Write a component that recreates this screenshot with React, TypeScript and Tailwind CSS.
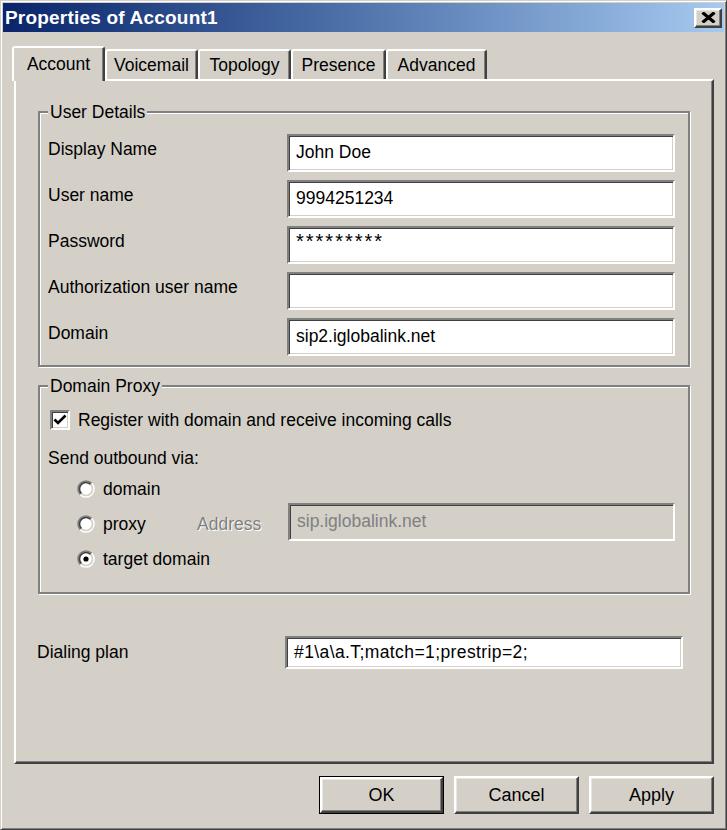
import React from "react";

const sunken =
  "border-2 border-t-[#808080] border-l-[#808080] border-b-white border-r-white shadow-[inset_1px_1px_0_#404040,inset_-1px_-1px_0_#d4d0c8]";
const raised =
  "border-2 border-t-white border-l-white border-b-[#404040] border-r-[#404040] shadow-[inset_-1px_-1px_0_#808080,inset_1px_1px_0_#e8e6e1]";
const etched =
  "border-2 border-[#808080] shadow-[inset_1px_1px_0_#ffffff,1px_1px_0_#ffffff]";

function Radio({ checked }: { checked?: boolean }) {
  return (
    <svg width="18" height="18" viewBox="0 0 18 18" className="shrink-0">
      <circle cx="9" cy="9" r="6.2" fill="#ffffff" />
      <path d="M3.34 14.66 A8 8 0 0 1 14.66 3.34" stroke="#808080" strokeWidth="1.6" fill="none" />
      <path d="M14.66 3.34 A8 8 0 0 1 3.34 14.66" stroke="#ffffff" strokeWidth="1.6" fill="none" />
      <path d="M4.4 13.6 A6.5 6.5 0 0 1 13.6 4.4" stroke="#404040" strokeWidth="1.6" fill="none" />
      <path d="M13.6 4.4 A6.5 6.5 0 0 1 4.4 13.6" stroke="#d4d0c8" strokeWidth="1.6" fill="none" />
      {checked && <circle cx="9" cy="9" r="2.6" fill="#000000" />}
    </svg>
  );
}

function Field({ label, value, masked }: { label: string; value: string; masked?: boolean }) {
  return (
    <div className="flex h-[38px]">
      <div className="w-[239px] shrink-0 pt-[5px] leading-[20px]">{label}</div>
      <div
        className={`flex-1 bg-white ${sunken} flex items-center pl-[7px] leading-[20px] ${
          masked ? "pb-[8px] tracking-[2px] text-[20px]" : "pb-[3px]"
        }`}
      >
        {value}
      </div>
    </div>
  );
}

function Tab({ label, selected, w }: { label: string; selected?: boolean; w: string }) {
  if (selected) {
    return (
      <div
        className={`relative z-10 ${w} h-[35px] bg-[#d4d0c8] border-l-2 border-t-2 border-r-2 border-l-white border-t-white border-r-[#404040] rounded-t-[3px] shadow-[inset_-1px_0_0_#808080] flex items-center justify-center leading-[20px] pb-[2px]`}
      >
        {label}
      </div>
    );
  }
  return (
    <div
      className={`${w} h-[30px] mb-[2px] bg-[#d4d0c8] border-l-2 border-t-2 border-r-2 border-l-white border-t-white border-r-[#404040] rounded-t-[3px] shadow-[inset_-1px_0_0_#808080] flex items-center justify-center leading-[20px]`}
    >
      {label}
    </div>
  );
}

function Button({ label, isDefault }: { label: string; isDefault?: boolean }) {
  const inner = (
    <div className={`w-full h-full ${raised} flex items-center justify-center text-[18px] leading-[20px] pb-[1px]`}>
      {label}
    </div>
  );
  if (isDefault) {
    return <div className="w-[125px] h-[38px] border border-black">{inner}</div>;
  }
  return <div className="w-[125px] h-[38px]">{inner}</div>;
}

export default function App() {
  return (
    <div className="w-[727px] h-[830px] bg-[#d4d0c8] border border-t-[#d4d0c8] border-l-[#d4d0c8] border-b-[#404040] border-r-[#404040] shadow-[inset_1px_1px_0_#ffffff,inset_-1px_-1px_0_#808080] p-[2px] flex flex-col font-['Liberation_Sans',Arial,sans-serif] text-[17.5px] text-black overflow-hidden">
      {/* Title bar */}
      <div className="h-[29px] shrink-0 bg-gradient-to-r from-[#0a246a] to-[#a6caf0] flex items-center justify-between pl-[2px] pr-[2px]">
        <div className="text-white font-bold text-[19px] leading-[22px] tracking-[0.2px]">Properties of Account1</div>
        <div className={`w-[28px] h-[20px] bg-[#d4d0c8] ${raised} flex items-center justify-center`}>
          <svg width="15" height="11" viewBox="0 0 15 11">
            <path d="M1.5 0.5 L13.5 10.5 M13.5 0.5 L1.5 10.5" stroke="#000" strokeWidth="3.2" fill="none" />
          </svg>
        </div>
      </div>

      {/* Body */}
      <div className="flex-1 flex flex-col pl-[11px] pr-[10px]">
        {/* Tabs */}
        <div className="mt-[14px] h-[35px] -mb-[2px] -ml-[2px] flex items-end">
          <Tab label="Account" selected w="w-[93px]" />
          <Tab label="Voicemail" w="w-[93px]" />
          <Tab label="Topology" w="w-[93px]" />
          <Tab label="Presence" w="w-[95px]" />
          <Tab label="Advanced" w="w-[101px]" />
        </div>

        {/* Panel */}
        <div className="h-[685px] border-2 border-l-white border-t-white border-r-[#404040] border-b-[#404040] shadow-[inset_-1px_-1px_0_#808080] flex flex-col">
          {/* User Details */}
          <fieldset className={`mt-[21px] mx-[22px] ${etched} pl-[8px] pr-[13px] pt-[12px] pb-[9px]`}>
            <legend className="px-[2px] leading-[20px] bg-[#d4d0c8] relative">User Details</legend>
            <div className="flex flex-col gap-[8px]">
              <Field label="Display Name" value="John Doe" />
              <Field label="User name" value="9994251234" />
              <Field label="Password" value="*********" masked />
              <Field label="Authorization user name" value="" />
              <Field label="Domain" value="sip2.iglobalink.net" />
            </div>
          </fieldset>

          {/* Domain Proxy */}
          <fieldset className={`mt-[9px] mx-[22px] ${etched} pl-[8px] pr-[13px] pt-[12px] pb-[15px]`}>
            <legend className="px-[2px] leading-[20px] bg-[#d4d0c8] relative">Domain Proxy</legend>
            <div className="flex flex-col">
              <div className="h-[24px] flex items-center gap-[8px] pl-[2px]">
                <div className={`w-[20px] h-[20px] bg-white ${sunken} flex items-center justify-center`}>
                  <svg width="14" height="12" viewBox="0 0 14 12">
                    <path d="M1.5 5.5 L5 9 L12.5 1.5" stroke="#000" strokeWidth="2.6" fill="none" />
                  </svg>
                </div>
                <span className="leading-[20px]">Register with domain and receive incoming calls</span>
              </div>
              <div className="mt-[16px] h-[20px] leading-[20px]">Send outbound via:</div>
              <div className="mt-[7px] h-[28px] flex items-center pl-[29px]">
                <div className="flex items-center gap-[8px]">
                  <Radio />
                  <span className="leading-[20px]">domain</span>
                </div>
              </div>
              <div className="h-[38px] flex items-center pl-[29px]">
                <div className="w-[120px] flex items-center gap-[8px] pt-[3px]">
                  <Radio />
                  <span className="leading-[20px]">proxy</span>
                </div>
                <div className="w-[91px] pt-[3px] leading-[20px] text-[#808080] [text-shadow:1px_1px_0_#ffffff]">Address</div>
                <div className={`flex-1 h-[38px] bg-[#d4d0c8] ${sunken} flex items-center pl-[7px] pb-[3px] leading-[20px] text-[#808080]`}>
                  sip.iglobalink.net
                </div>
              </div>
              <div className="h-[36px] flex items-center pl-[29px]">
                <div className="flex items-center gap-[8px]">
                  <Radio checked />
                  <span className="leading-[20px]">target domain</span>
                </div>
              </div>
            </div>
          </fieldset>

          {/* Dialing plan */}
          <div className="mt-[42px] h-[33px] flex pl-[21px] pr-[29px]">
            <div className="w-[248px] shrink-0 flex items-center leading-[20px] pb-[2px]">Dialing plan</div>
            <div className={`flex-1 bg-white ${sunken} flex items-center pl-[7px] pb-[2px] leading-[20px] tracking-[0.4px]`}>
              {"#1\\a\\a.T;match=1;prestrip=2;"}
            </div>
          </div>
        </div>

        {/* Buttons */}
        <div className="mt-[12px] flex justify-end gap-[10px]">
          <Button label="OK" isDefault />
          <Button label="Cancel" />
          <Button label="Apply" />
        </div>
      </div>
    </div>
  );
}
